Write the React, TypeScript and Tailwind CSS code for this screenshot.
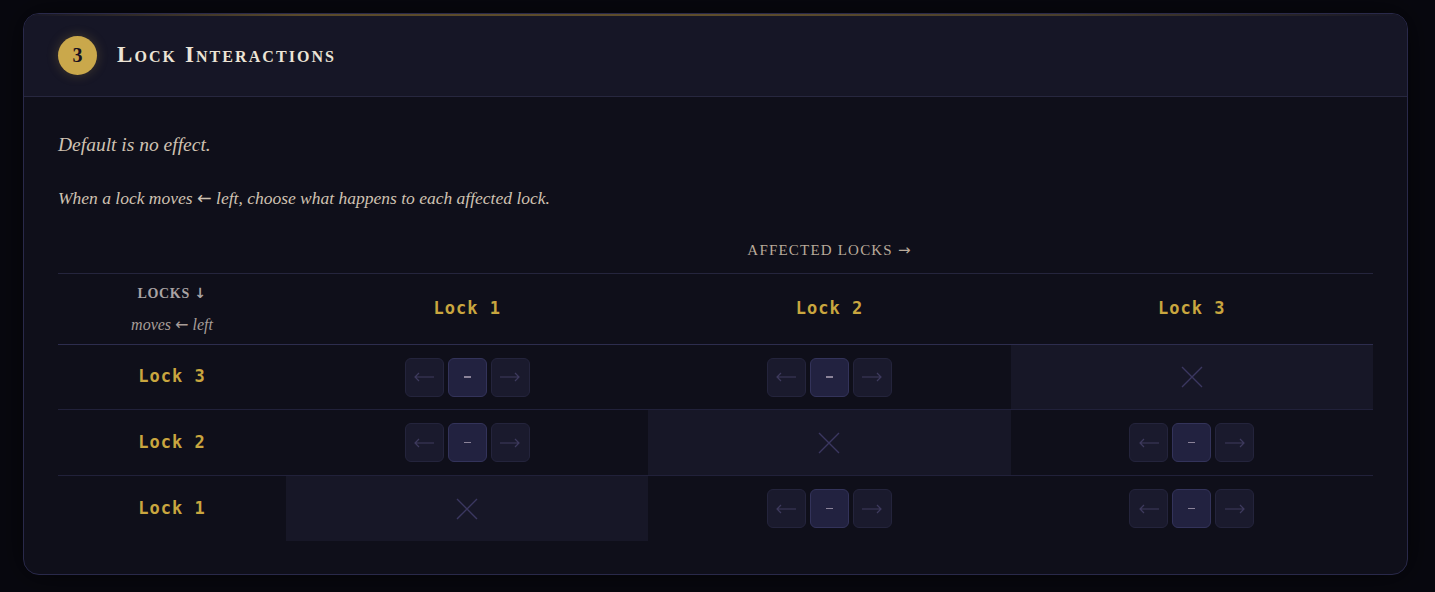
import React from "react";

const serif = { fontFamily: '"Liberation Serif", "DejaVu Serif", serif' };
const mono = { fontFamily: '"DejaVu Sans Mono", "Liberation Mono", monospace' };
const arrowFont = { fontFamily: '"DejaVu Sans", sans-serif', fontStyle: "normal" as const };

function Arr({ c }: { c: string }) {
  return <span style={arrowFont} className="text-[1em]">{c}</span>;
}

function XMark() {
  return (
    <svg width="22" height="22" viewBox="0 0 22 22" fill="none">
      <path d="M1 1L21 21M21 1L1 21" stroke="#3b3760" strokeWidth="1.4" />
    </svg>
  );
}

function Choice() {
  return (
    <div className="flex gap-[4px]">
      <div className="w-[39px] h-[39px] rounded-[6px] border border-[#24243c] bg-[#1a1a2d] flex items-center justify-center">
        <svg width="22" height="10" viewBox="0 0 22 10" fill="none">
          <path d="M21 5H2M6 1L2 5L6 9" stroke="#3e3a5e" strokeWidth="1.2" />
        </svg>
      </div>
      <div className="w-[39px] h-[39px] rounded-[6px] border border-[#33335a] bg-[#222240] flex items-center justify-center">
        <div className="w-[7px] h-[1.5px] bg-[#8b8399]" />
      </div>
      <div className="w-[39px] h-[39px] rounded-[6px] border border-[#24243c] bg-[#1a1a2d] flex items-center justify-center">
        <svg width="22" height="10" viewBox="0 0 22 10" fill="none">
          <path d="M1 5H20M16 1L20 5L16 9" stroke="#3e3a5e" strokeWidth="1.2" />
        </svg>
      </div>
    </div>
  );
}

function LockLabel({ n }: { n: number }) {
  return (
    <span className="text-[17px] font-semibold text-[#c9a63f] tracking-[0.06em]" style={mono}>
      Lock&nbsp;{n}
    </span>
  );
}

const rows = [3, 2, 1];
const cols = [1, 2, 3];

export default function App() {
  return (
    <div className="min-h-[592px] w-full bg-[#08080f] pt-[13px] pl-[23px]">
      <div className="w-[1385px] rounded-[16px] border border-[#29294a] bg-[#0f0f1a] overflow-hidden shadow-[0_0_30px_rgba(0,0,0,0.6)]">
        <div className="relative bg-[#161626] border-b border-[#27273f] h-[83px] flex items-center pl-[34px]">
          <div className="absolute top-0 left-0 right-0 h-[2px] bg-[linear-gradient(90deg,transparent_0%,#5a4a2a_20%,#5e4d2b_50%,#4a3f2c_75%,transparent_100%)]" />
          <div className="w-[39px] h-[39px] rounded-full bg-[#caa84b] flex items-center justify-center shadow-[0_0_12px_rgba(202,168,75,0.25)]">
            <span className="text-[20px] font-bold text-[#171020]" style={serif}>3</span>
          </div>
          <div
            className="ml-[20px] text-[23px] font-bold text-[#ece4d6] tracking-[0.09em]"
            style={{ ...serif, fontVariant: "small-caps" }}
          >
            Lock Interactions
          </div>
        </div>
        <div className="px-[34px] pt-[35px] pb-[33px]">
          <p className="italic text-[19.5px] leading-[26px] text-[#cfc2b2]" style={serif}>
            Default is no effect.
          </p>
          <p className="italic text-[17.5px] leading-[22px] text-[#cfc2b2] mt-[29px]" style={serif}>
            When a lock moves <Arr c="←" /> left, choose what happens to each affected lock.
          </p>
          <div className="grid grid-cols-[228px_1fr_1fr_1fr] mt-[31px]">
            <div />
            <div className="col-span-3 text-center text-[15px] leading-[20px] tracking-[0.08em] text-[#b9aa9a] pb-[13px]" style={serif}>
              AFFECTED LOCKS <Arr c="→" />
            </div>
          </div>
          <div className="border-t border-[#25253d]">
            <div className="grid grid-cols-[228px_1fr_1fr_1fr] h-[71px] border-b border-[#2d2d4e]">
              <div className="flex flex-col items-center justify-center gap-[14px]">
                <span className="text-[14px] leading-[16px] font-bold tracking-[0.05em] text-[#a9a3a4]" style={serif}>LOCKS <Arr c="↓" /></span>
                <span className="italic text-[16px] leading-[18px] text-[#a79d98]" style={serif}>moves <Arr c="←" /> left</span>
              </div>
              {cols.map((c) => (
                <div key={c} className="flex items-center justify-center">
                  <LockLabel n={c} />
                </div>
              ))}
            </div>
            {rows.map((r, i) => (
              <div
                key={r}
                className={`grid grid-cols-[228px_1fr_1fr_1fr] ${i === 1 ? "h-[66px]" : "h-[65px]"} ${i < rows.length - 1 ? "border-b border-[#21213a]" : ""}`}
              >
                <div className="flex items-center justify-center">
                  <LockLabel n={r} />
                </div>
                {cols.map((c) =>
                  c === r ? (
                    <div key={c} className="flex items-center justify-center bg-[#171727]">
                      <XMark />
                    </div>
                  ) : (
                    <div key={c} className="flex items-center justify-center">
                      <Choice />
                    </div>
                  )
                )}
              </div>
            ))}
          </div>
        </div>
      </div>
    </div>
  );
}
